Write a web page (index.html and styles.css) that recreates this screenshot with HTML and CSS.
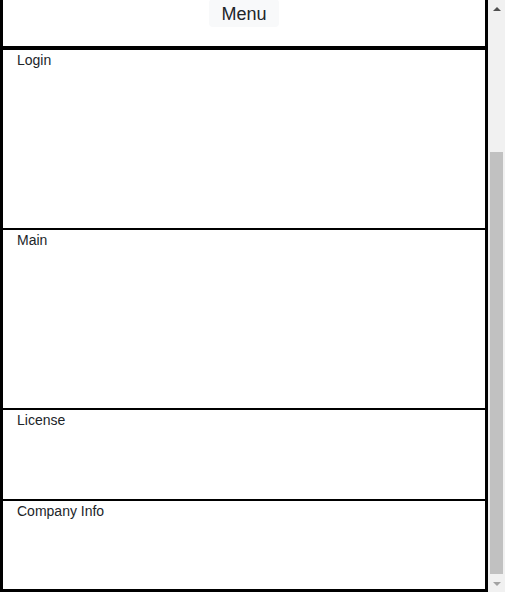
FILE: index.html
```html
<!DOCTYPE html>
<html lang="en">
<head>
    <meta charset="UTF-8">
    <meta name="viewport" content="width=device-width, initial-scale=1.0">
    <title>Layout</title>
    <link rel="stylesheet" href="styles.css">
</head>
<body>
    <div class="frame">
        <header class="top">
            <button class="menu-btn">Menu</button>
        </header>
        <section class="panel login">Login</section>
        <section class="panel main">Main</section>
        <section class="panel license">License</section>
        <section class="panel company">Company Info</section>
    </div>

    <!-- page scrollbar -->
    <div class="scrollbar">
        <span class="arrow up"></span>
        <div class="track">
            <div class="thumb"></div>
        </div>
        <span class="arrow down"></span>
    </div>

    <script src="script.js"></script>
</body>
</html>
```

FILE: styles.css
```css
body {
    font-family: "Liberation Sans", Arial, sans-serif;
    font-size: 14px;
    line-height: 1.5;
    color: #212529;
    margin: 0 17px 0 0;
    background-color: #fff;
}
.frame {
    border: 3px solid #000;
}
.top {
    display: flex;
    justify-content: center;
    padding: 187px 0 19px;
    border-bottom: 4px solid #000;
}
.menu-btn {
    font-family: inherit;
    font-size: 18px;
    line-height: 18px;
    color: #212529;
    background-color: #f8f9fa;
    border: none;
    border-radius: 4px;
    padding: 6px 12px 4px;
}
.panel {
    padding: 0 14px;
    border-bottom: 2px solid #000;
}
.login, .main {
    height: 178px;
}
.license {
    height: 89px;
}
.company {
    height: 88px;
    border-bottom: none;
}

.scrollbar {
    position: fixed;
    top: 0;
    right: 0;
    bottom: 0;
    width: 17px;
    background-color: #f1f1f1;
    display: flex;
    flex-direction: column;
}
.arrow {
    height: 17px;
    display: flex;
    align-items: center;
    justify-content: center;
}
.arrow::before {
    content: "";
    border-left: 4px solid transparent;
    border-right: 4px solid transparent;
}
.arrow.up::before {
    border-bottom: 4px solid #505050;
}
.arrow.down::before {
    border-top: 4px solid #a3a3a3;
}
.track {
    flex: 1;
    display: flex;
    flex-direction: column;
    justify-content: flex-end;
    padding: 0 2px 1px;
}
.thumb {
    height: 422px;
    background-color: #c1c1c1;
}
```

FILE: script.js
```js
// Start at the bottom of the page
window.scrollTo(0, document.documentElement.scrollHeight);
```
